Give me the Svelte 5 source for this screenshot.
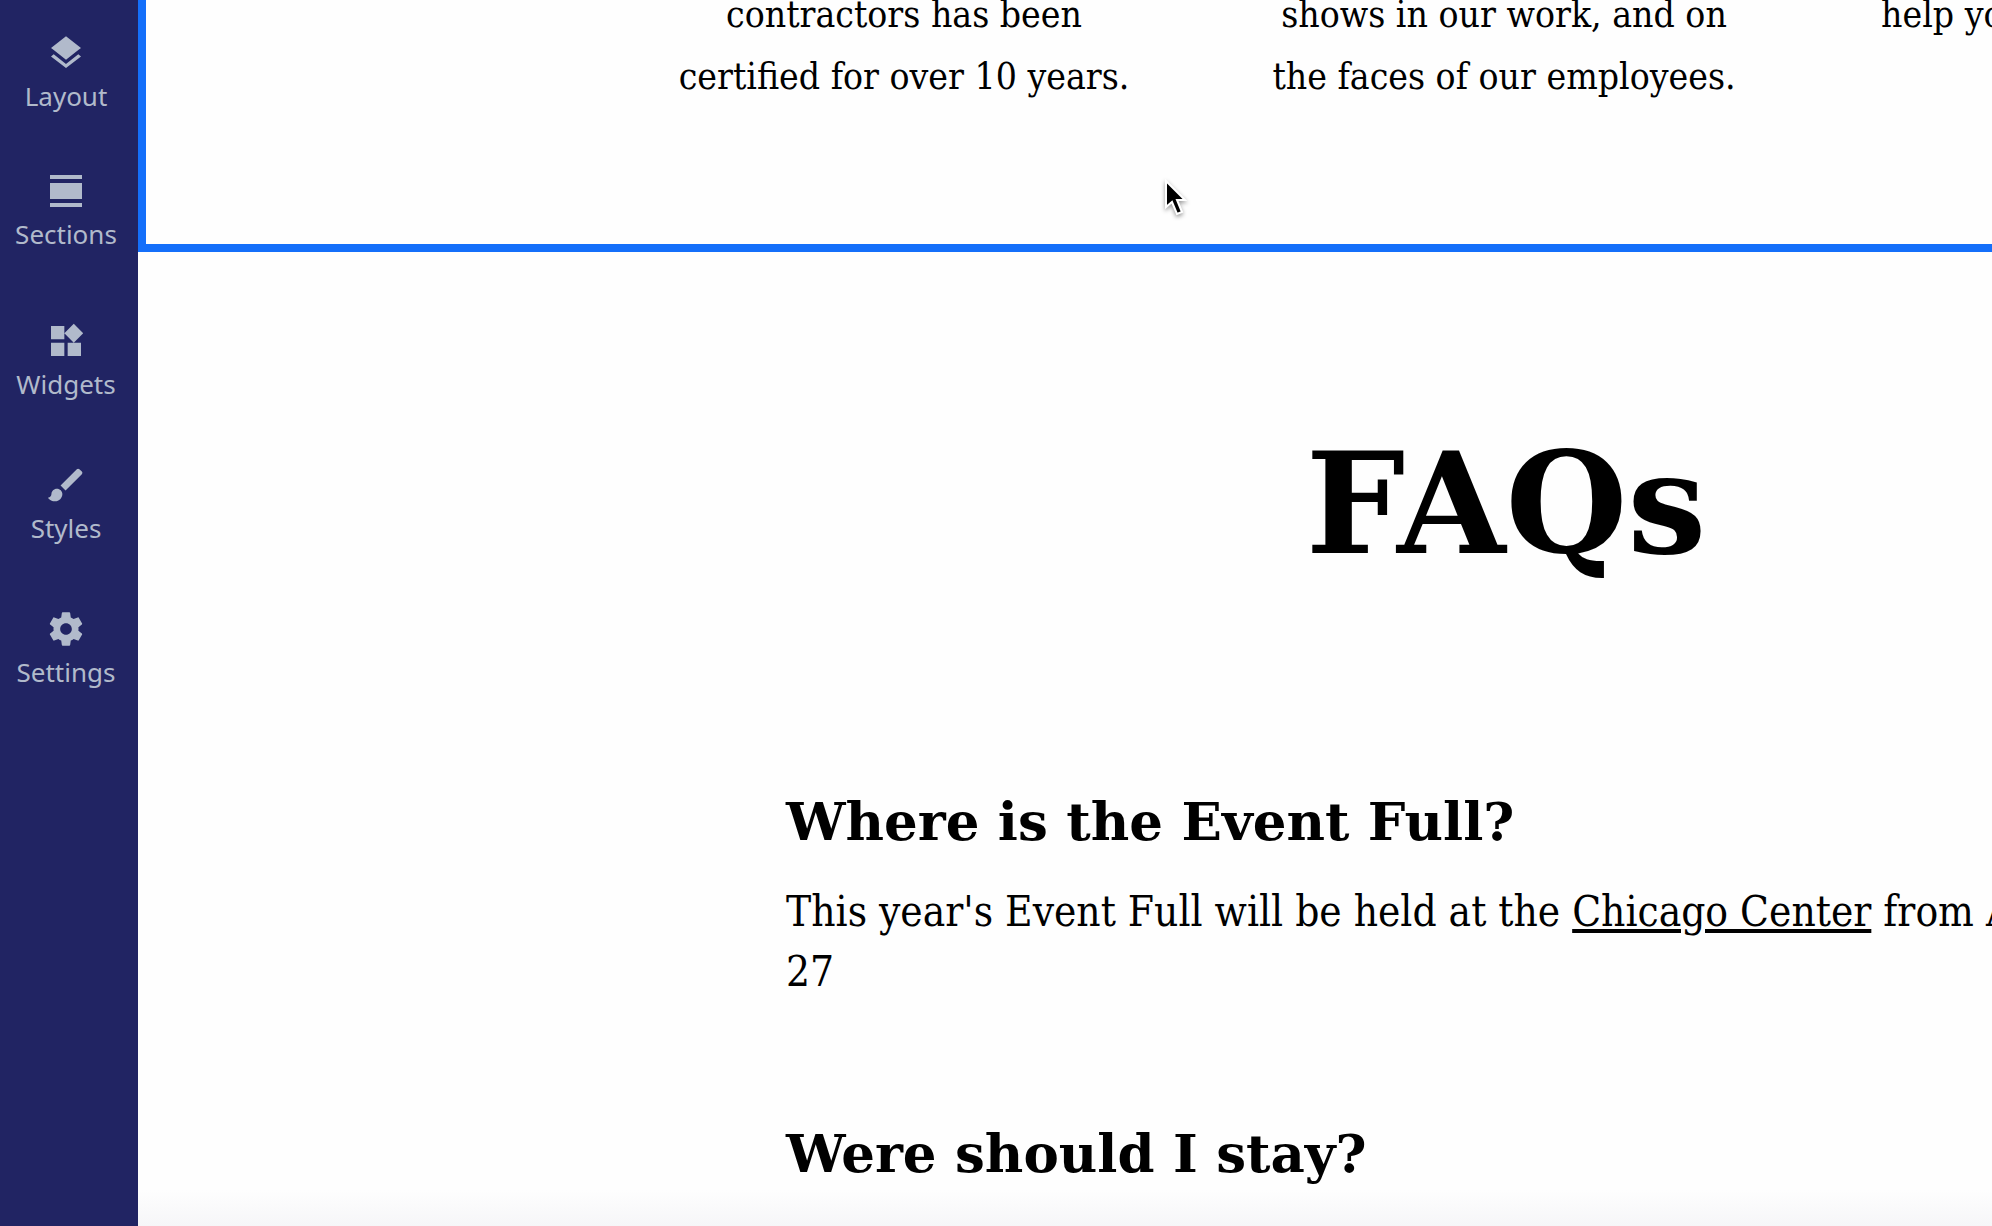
<script lang="ts">
    type Tool = {
        name: string;
        viewBox: string;
        path: string;
    };

    const toolGroups: Tool[][] = [
        [
            {
                name: 'Layout',
                viewBox: '0 0 24 24',
                path: 'M11.99 18.54l-7.37-5.73L3 14.07l9 7 9-7-1.63-1.27-7.38 5.74zM12 16l7.36-5.73L21 9l-9-7-9 7 1.63 1.27L12 16z'
            },
            {
                name: 'Sections',
                viewBox: '0 0 24 24',
                path: 'M2.4 2.4h19.2v2.4H2.4zM2.4 7.2h19.2v9.6H2.4zM2.4 19.2h19.2v2.4H2.4z'
            }
        ],
        [
            {
                name: 'Widgets',
                viewBox: '0 0 24 24',
                path: 'M13 13v8h8v-8h-8zM3 21h8v-8H3v8zM3 3v8h8V3H3zm13.66-1.31L11 7.34 16.66 13l5.66-5.66-5.66-5.65z'
            },
            {
                name: 'Styles',
                viewBox: '1 1 22 22',
                path: 'M7 14c-1.66 0-3 1.34-3 3 0 1.31-1.16 2-2 2 .92 1.22 2.49 2 4 2 2.21 0 4-1.79 4-4 0-1.66-1.34-3-3-3zm13.71-9.37l-1.34-1.34c-.39-.39-1.02-.39-1.41 0L9 12.25 11.75 15l8.96-8.96c.39-.39.39-1.02 0-1.41z'
            },
            {
                name: 'Settings',
                viewBox: '0 0 24 24',
                path: 'M19.43 12.98c.04-.32.07-.64.07-.98s-.03-.66-.07-.98l2.11-1.65c.19-.15.24-.42.12-.64l-2-3.46c-.12-.22-.39-.3-.61-.22l-2.49 1c-.52-.4-1.08-.73-1.69-.98l-.38-2.65C14.46 2.18 14.25 2 14 2h-4c-.25 0-.46.18-.49.42l-.38 2.65c-.61.25-1.17.59-1.69.98l-2.49-1c-.23-.09-.49 0-.61.22l-2 3.46c-.13.22-.07.49.12.64l2.11 1.65c-.04.32-.07.65-.07.98s.03.66.07.98l-2.11 1.65c-.19.15-.24.42-.12.64l2 3.46c.12.22.39.3.61.22l2.49-1c.52.4 1.08.73 1.69.98l.38 2.65c.03.24.24.42.49.42h4c.25 0 .46-.18.49-.42l.38-2.65c.61-.25 1.17-.59 1.69-.98l2.49 1c.23.09.49 0 .61-.22l2-3.46c.12-.22.07-.49-.12-.64l-2.11-1.65zM12 15.5c-1.93 0-3.5-1.57-3.5-3.5s1.57-3.5 3.5-3.5 3.5 1.57 3.5 3.5-1.57 3.5-3.5 3.5z'
            }
        ]
    ];
</script>

<div class="editor">
    <nav class="toolbar" aria-label="Editor">
        {#each toolGroups as group}
            <div class="tool-group">
                {#each group as tool (tool.name)}
                    <button type="button" class="tool">
                        <svg viewBox={tool.viewBox} aria-hidden="true">
                            <path d={tool.path} />
                        </svg>
                        <span>{tool.name}</span>
                    </button>
                {/each}
            </div>
        {/each}
    </nav>

    <main class="canvas">
        <section class="features selected">
            <p>contractors has been<br />certified for over 10 years.</p>
            <p>shows in our work, and on<br />the faces of our employees.</p>
            <p class="cut">help yo<br />&nbsp;</p>
        </section>

        <section class="faq">
            <h1>FAQs</h1>

            <article>
                <h2>Where is the Event Full?</h2>
                <p>
                    This year's Event Full will be held at the <a href="#chicago-center">Chicago Center</a> from A<br />27
                </p>
            </article>

            <article>
                <h2>Were should I stay?</h2>
            </article>
        </section>
    </main>

    <svg class="cursor" viewBox="0 0 24 38" aria-hidden="true">
        <path d="M2 2v26l6-5 5 12 5-2-5-12h8z" />
    </svg>
</div>

<style>
    :global(body) {
        margin: 0;
        background: #fefefe;
    }

    .editor {
        position: relative;
        display: flex;
        height: 100vh;
        overflow: hidden;
        color: #000;
    }

    .toolbar {
        display: flex;
        flex: none;
        flex-direction: column;
        gap: 69px;
        box-sizing: border-box;
        width: 138px;
        padding: 33px 6px 0 0;
        background: #212463;
    }

    .tool-group {
        display: flex;
        flex-direction: column;
        gap: 57px;
    }

    .tool-group + .tool-group {
        gap: 63px;
    }

    .tool {
        display: flex;
        flex-direction: column;
        align-items: center;
        gap: 5px;
        padding: 0;
        border: 0;
        background: none;
        color: #b1bacb;
        font: 26px/36px 'Noto Sans', sans-serif;
        cursor: pointer;
    }

    .tool svg {
        width: 40px;
        height: 40px;
        fill: currentColor;
    }

    .canvas {
        flex: 1;
        min-width: 0;
        overflow: hidden;
        background: linear-gradient(to top, #f6f6f8, #fefefe 36px);
        font-family: 'DejaVu Serif Condensed', 'DejaVu Serif', serif;
        white-space: nowrap;
    }

    .features {
        display: grid;
        grid-template-columns: repeat(3, 476px);
        gap: 124px;
        align-content: end;
        box-sizing: border-box;
        height: 252px;
        padding: 0 0 136px 520px;
        overflow: hidden;
        text-align: center;
    }

    .selected {
        border: solid #146ffa;
        border-width: 0 0 8px 8px;
    }

    .features p {
        margin: 0;
        font-size: 37px;
        line-height: 62px;
    }

    .features .cut {
        padding-left: 15px;
        text-align: left;
    }

    .faq {
        padding: 162px 0 0 648px;
    }

    h1 {
        width: 1440px;
        margin: 0 0 187px;
        font-family: 'DejaVu Serif', serif;
        font-size: 140px;
        line-height: 180px;
        text-align: center;
    }

    article {
        margin-bottom: 111px;
    }

    h2 {
        margin: 0;
        font-family: 'DejaVu Serif', serif;
        font-size: 53px;
        line-height: 80px;
    }

    .faq p {
        margin: 21px 0 0;
        font-size: 42px;
        line-height: 60px;
    }

    a {
        color: inherit;
        text-decoration-thickness: 4px;
        text-underline-offset: 3px;
    }

    .cursor {
        position: absolute;
        top: 179px;
        left: 1164px;
        width: 24px;
        height: 38px;
        fill: #000;
        stroke: #fff;
        stroke-width: 2;
        filter: drop-shadow(0 2px 2px rgba(0, 0, 0, 0.4));
    }
</style>
